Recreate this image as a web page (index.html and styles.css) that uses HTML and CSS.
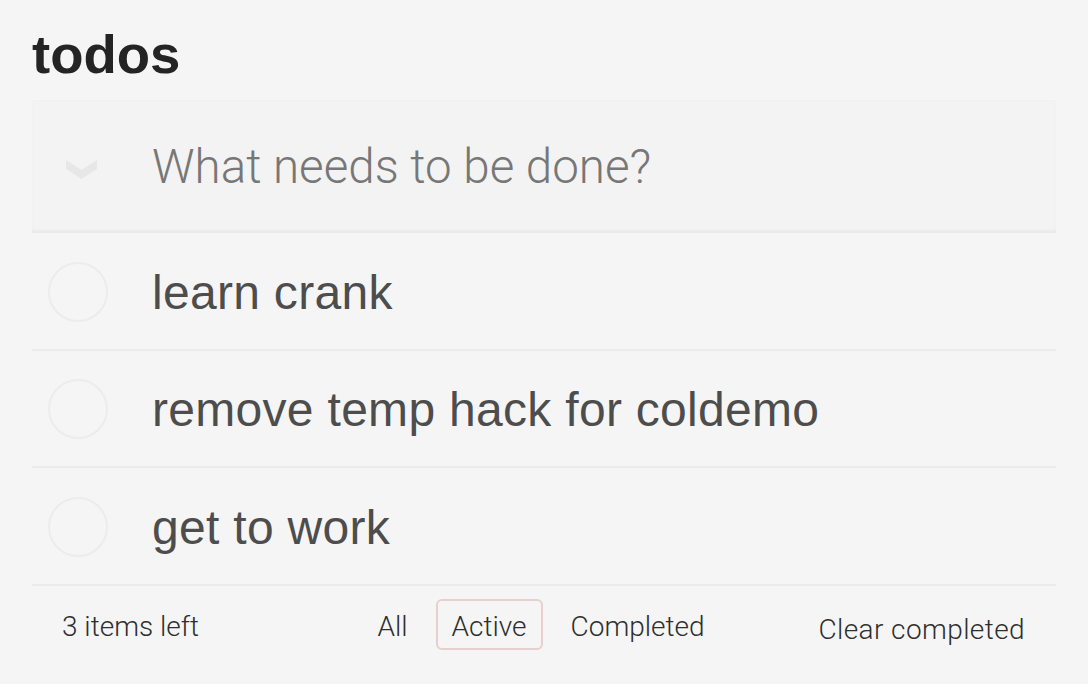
FILE: index.html
```html
<!DOCTYPE html>
<html lang="en">
<head>
<meta charset="utf-8">
<title>todos</title>
<link rel="stylesheet" href="styles.css">
</head>
<body>
<section class="todoapp">
  <header class="header">
    <h1 class="title">todos</h1>
    <div class="entry">
      <div class="toggle-all">
        <svg class="chevron" width="31" height="19" viewBox="0 0 31 19"><polygon points="0,0 15.5,10 31,0 31,9 15.5,19 0,9" fill="#e7e7e7"/></svg>
      </div>
      <div class="new-todo">What needs to be done?</div>
    </div>
  </header>
  <ul class="todo-list">
    <li class="todo">
      <span class="check"></span>
      <span class="label">learn crank</span>
    </li>
    <li class="todo">
      <span class="check"></span>
      <span class="label">remove temp hack for coldemo</span>
    </li>
    <li class="todo">
      <span class="check"></span>
      <span class="label">get to work</span>
    </li>
  </ul>
  <footer class="footer">
    <span class="todo-count">3 items left</span>
    <ul class="filters">
      <li><a class="filter">All</a></li>
      <li><a class="filter selected">Active</a></li>
      <li><a class="filter">Completed</a></li>
    </ul>
    <span class="clear-completed">Clear completed</span>
  </footer>
</section>
</body>
</html>
```
FILE: styles.css
```css
html, body {
  margin: 0;
  padding: 0;
}
body {
  background: #f5f5f5;
  color: #4d4d4d;
  font-family: "Liberation Sans", Arial, sans-serif;
}
.todoapp {
  padding: 0 32px;
}
.title {
  margin: 0 0 15px;
  padding-top: 25px;
  font-size: 54.5px;
  line-height: 60px;
  font-weight: 700;
  color: #242424;
}
.entry {
  display: flex;
  align-items: center;
  height: 133px;
  box-sizing: border-box;
  background: #f3f3f3;
  box-shadow: inset 0 -3px 2px rgba(0, 0, 0, 0.035);
  border-top: 1px solid #f1f1f1;
}
.toggle-all {
  width: 120px;
  flex: none;
  box-sizing: border-box;
  padding-left: 34px;
  padding-top: 4px;
  display: flex;
}
.new-todo {
  font-family: Roboto, "Liberation Sans", sans-serif;
  font-weight: 300;
  font-size: 47.5px;
  line-height: 60px;
  color: #777;
  white-space: nowrap;
}
.todo-list {
  list-style: none;
  margin: 0;
  padding: 0;
}
.todo {
  display: flex;
  align-items: center;
  height: 117.6px;
  box-sizing: border-box;
  border-bottom: 2px solid #ebebeb;
}
.check {
  flex: none;
  width: 60px;
  height: 60px;
  box-sizing: border-box;
  border: 2px solid #ececec;
  border-radius: 50%;
  margin-left: 16px;
  margin-right: 44px;
  margin-top: 2px;
}
.label {
  padding-top: 4px;
  font-size: 48px;
  line-height: 58px;
  letter-spacing: 0.3px;
  color: #4d4d4d;
  white-space: nowrap;
}
.footer {
  display: grid;
  grid-template-columns: 1fr auto 1fr;
  align-items: center;
  padding: 7px 36px 0 30px;
  font-family: Roboto, "Liberation Sans", sans-serif;
  font-weight: 300;
  font-size: 28px;
  color: #2e2e2e;
}
.todo-count {
  justify-self: start;
  padding-top: 5px;
}
.filters {
  list-style: none;
  margin: 0;
  padding: 0;
  display: flex;
}
.filter {
  display: block;
  margin: 6px;
  padding: 9px 14px 4px;
  line-height: 34px;
  border: 2px solid transparent;
  border-radius: 6px;
  color: #2e2e2e;
}
.filter.selected {
  border-color: #e8cfcf;
}
.clear-completed {
  justify-self: end;
  padding-top: 10px;
  margin-right: -5px;
  letter-spacing: 0.4px;
}
```
